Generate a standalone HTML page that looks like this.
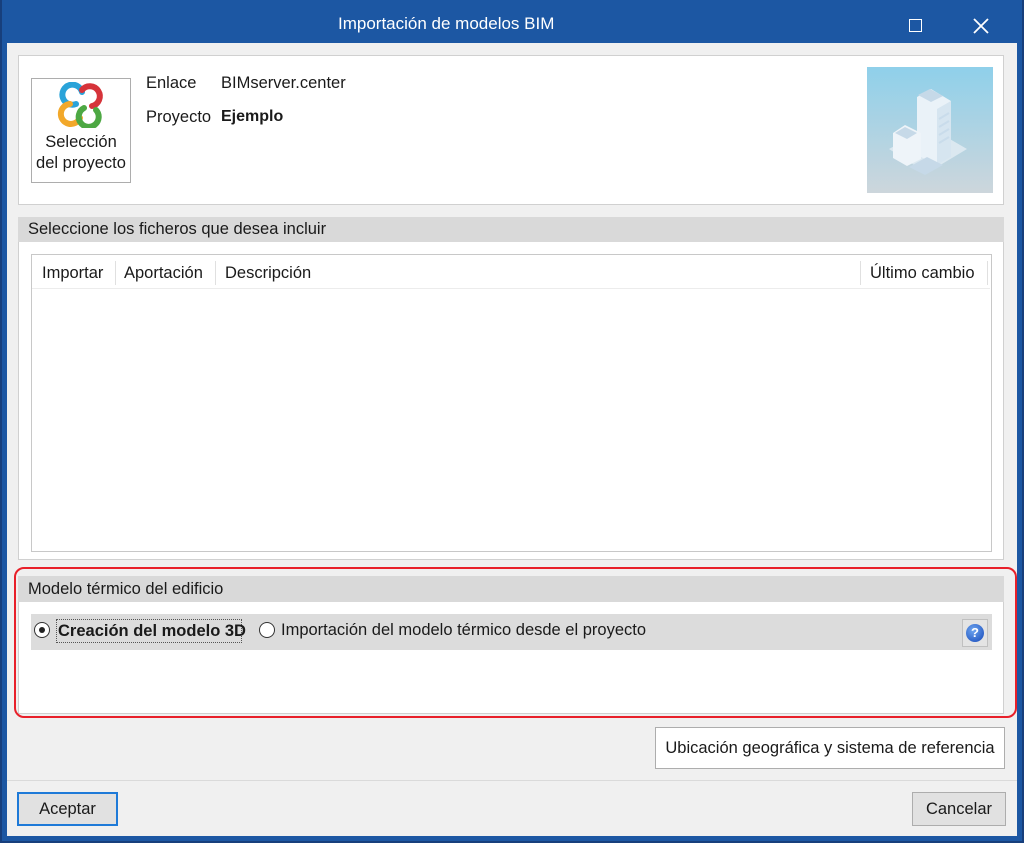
<!DOCTYPE html>
<html><head><meta charset="utf-8"><style>
*{box-sizing:border-box;margin:0;padding:0}
body{width:1024px;height:843px;overflow:hidden;background:#1c57a3;font-family:"Liberation Sans",sans-serif;font-size:16.5px;color:#1a1a1a;position:relative}
.a{position:absolute;white-space:nowrap}
.win{left:7px;top:43px;width:1010px;height:793px;background:#f0f0f0}
.title{left:338px;top:0;height:43px;color:#fff;font-size:17px;line-height:48px}
</style></head><body>
<div class="a" style="left:0;top:0;width:1024px;height:843px;border:2px solid #173f7c;border-top:none"></div>
<div class="a title">Importación de modelos BIM</div>
<div class="a" style="left:909px;top:19px;width:13px;height:13px;border:1.5px solid #fff"></div>
<svg class="a" style="left:973px;top:18px" width="16" height="16"><path d="M1 1L15 15M15 1L1 15" stroke="#fff" stroke-width="1.8"/></svg>
<div class="a win"></div>
<!-- top panel -->
<div class="a" style="left:18px;top:55px;width:986px;height:150px;background:#fff;border:1px solid #d0d0d0"></div>
<div class="a" style="left:31px;top:78px;width:100px;height:105px;border:1px solid #adadad;background:#fff;text-align:center;line-height:21px;padding-top:53px">Selección<br>del proyecto</div>
<svg class="a" style="left:56px;top:82px" width="50" height="46" viewBox="0 0 50 46">
<g fill="none" stroke-width="6" stroke-linecap="round">
<path d="M20 22 A10 10 0 1 1 26 10" stroke="#2aa3d9"/>
<path d="M26 8 A10 10 0 1 1 36 24" stroke="#d6333a"/>
<path d="M14 22 A10 10 0 1 0 24 36" stroke="#f2a82a"/>
<path d="M28 26 A10 10 0 1 0 40 28" stroke="#4da843"/>
</g></svg>
<div class="a" style="left:146px;top:74px">Enlace</div>
<div class="a" style="left:221px;top:74px">BIMserver.center</div>
<div class="a" style="left:146px;top:108px">Proyecto</div>
<div class="a" style="left:221px;top:108px;font-weight:bold;font-size:16px">Ejemplo</div>
<div class="a" style="left:867px;top:67px;width:126px;height:126px;background:linear-gradient(#8fd0ea,#cdd6dc)"></div>
<svg class="a" style="left:867px;top:67px" width="126" height="126" viewBox="0 0 126 126">
<polygon points="22,82 60,106 100,82 62,60" fill="#dbe8f0"/>
<polygon points="50,30 64,22 84,34 84,90 70,98 50,88" fill="#eaf2f8"/>
<polygon points="70,42 84,34 84,90 70,98" fill="#d6e5f0"/>
<polygon points="51,28 63,22 76,29 64,35" fill="#c6d9e8"/>
<polygon points="26,66 38,58 54,66 54,92 40,99 26,91" fill="#eef4f9"/>
<polygon points="28,66 38,60 50,66 40,72" fill="#c6d9e8"/>
<polygon points="42,100 60,90 76,98 58,108" fill="#c6d9e8"/>
<g stroke="#c9dceb" stroke-width="2"><path d="M72 52L82 46M72 60L82 54M72 68L82 62M72 76L82 70"/></g>
</svg>
<!-- section 2 -->
<div class="a" style="left:18px;top:217px;width:986px;height:343px;background:#fff;border:1px solid #d0d0d0"></div>
<div class="a" style="left:18px;top:217px;width:986px;height:25px;background:#d9d9d9;padding:3px 10px">Seleccione los ficheros que desea incluir</div>
<div class="a" style="left:31px;top:254px;width:961px;height:298px;border:1px solid #c8c8c8;background:#fff"></div>
<div class="a" style="left:32px;top:255px;width:958px;height:34px;border-bottom:1px solid #ececec"></div>
<div class="a" style="left:42px;top:264px">Importar</div>
<div class="a" style="left:115px;top:261px;width:1px;height:24px;background:#e0e0e0"></div>
<div class="a" style="left:124px;top:264px">Aportación</div>
<div class="a" style="left:215px;top:261px;width:1px;height:24px;background:#e0e0e0"></div>
<div class="a" style="left:225px;top:264px">Descripción</div>
<div class="a" style="left:860px;top:261px;width:1px;height:24px;background:#e0e0e0"></div>
<div class="a" style="left:870px;top:264px">Último cambio</div>
<div class="a" style="left:987px;top:261px;width:1px;height:24px;background:#e0e0e0"></div>
<!-- section 3 -->
<div class="a" style="left:18px;top:576px;width:986px;height:138px;background:#fff;border:1px solid #d0d0d0"></div>
<div class="a" style="left:18px;top:576px;width:986px;height:26px;background:#d9d9d9;padding:4px 10px">Modelo térmico del edificio</div>
<div class="a" style="left:31px;top:614px;width:961px;height:36px;background:#dcdcdc"></div>
<div class="a" style="left:34px;top:622px;width:16px;height:16px;border-radius:50%;border:1.5px solid #333;background:#fff"></div>
<div class="a" style="left:39px;top:627px;width:6px;height:6px;border-radius:50%;background:#222"></div>
<div class="a" style="left:56px;top:619px;width:186px;height:24px;padding:2px 1px;border:1px dotted #555;font-weight:bold;font-size:16.5px">Creación del modelo 3D</div>
<div class="a" style="left:259px;top:622px;width:16px;height:16px;border-radius:50%;border:1.5px solid #333;background:#fff"></div>
<div class="a" style="left:281px;top:621px">Importación del modelo térmico desde el proyecto</div>
<div class="a" style="left:962px;top:619px;width:26px;height:28px;border:1px solid #c0c0c0;background:#e4e4e4"></div>
<div class="a" style="left:966px;top:624px;width:18px;height:18px;border-radius:50%;background:radial-gradient(circle at 40% 35%,#6fa6f0,#1447b8);color:#fff;font-weight:bold;font-size:13px;text-align:center;line-height:18px">?</div>
<div class="a" style="left:14px;top:567px;width:1003px;height:151px;border:2px solid #e8202a;border-radius:10px"></div>
<div class="a" style="left:655px;top:727px;width:350px;height:42px;background:#fff;border:1px solid #adadad;text-align:center;line-height:40px">Ubicación geográfica y sistema de referencia</div>
<div class="a" style="left:7px;top:780px;width:1010px;height:1px;background:#dadada"></div>
<div class="a" style="left:17px;top:792px;width:101px;height:34px;background:#e1e1e1;border:2px solid #1e7ad8;text-align:center;line-height:30px">Aceptar</div>
<div class="a" style="left:912px;top:792px;width:94px;height:34px;background:#e1e1e1;border:1px solid #adadad;text-align:center;line-height:32px">Cancelar</div>
</body></html>
